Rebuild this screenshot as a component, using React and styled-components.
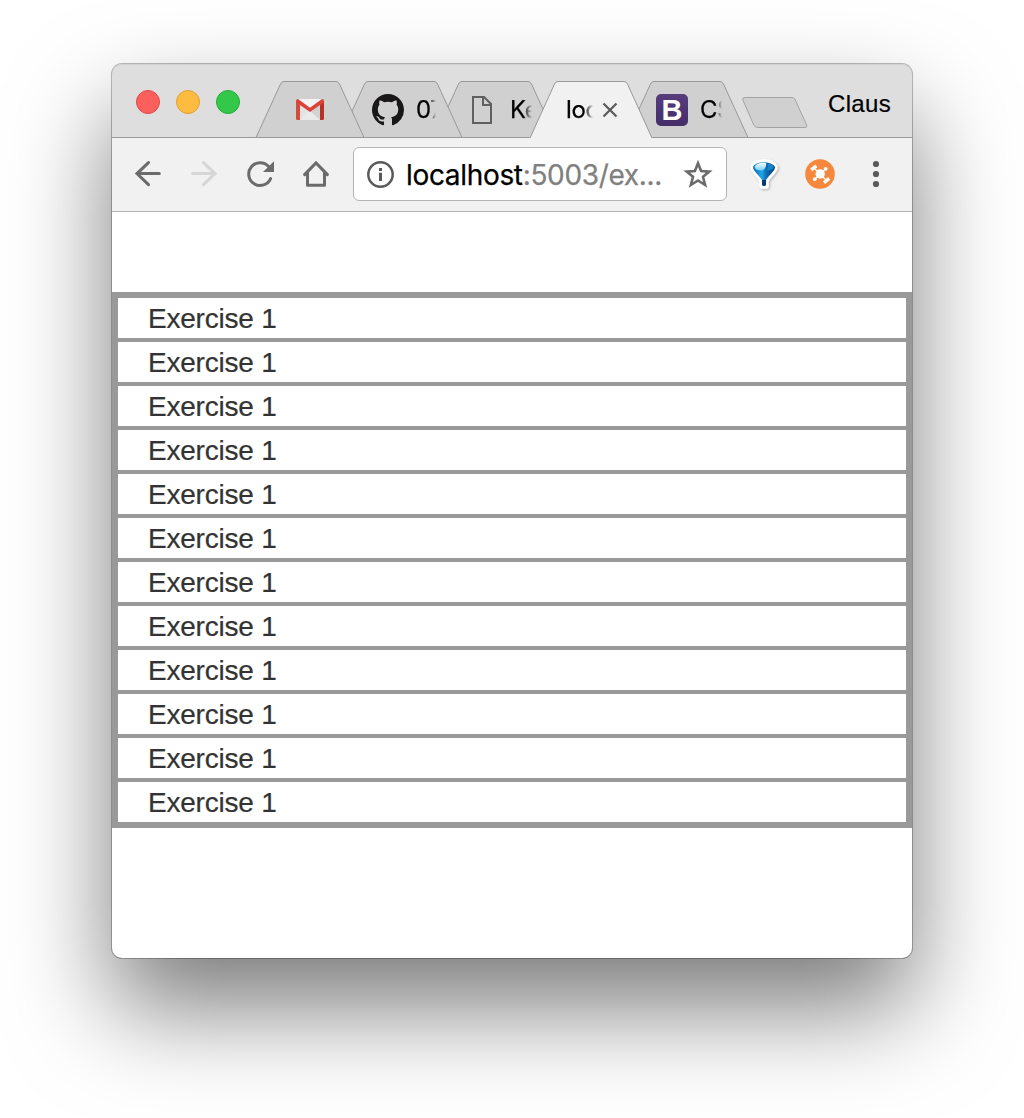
import React from 'react';
import styled, { createGlobalStyle } from 'styled-components';

const GlobalStyle = createGlobalStyle`
  * { box-sizing: border-box; }
  html, body { margin: 0; background: #fff; overflow: hidden; }
`;

const ui = `Inter, "Liberation Sans", sans-serif`;

const Desktop = styled.div`
  height: 1118px;
  padding: 64px 112px 160px;
  background: #fff;
  overflow: hidden;
`;

const Window = styled.main`
  display: flex;
  flex-direction: column;
  width: 800px;
  height: 894px;
  border-radius: 10px;
  background: #fff;
  box-shadow: 0 0 0 1px rgba(0, 0, 0, 0.26), 0 50px 100px rgba(0, 0, 0, 0.52);
`;

const TitleBar = styled.header`
  display: flex;
  height: 74px;
  padding-left: 24px;
  border-radius: 10px 10px 0 0;
  background: #dedede;
  box-shadow: inset 0 -1px #999, inset 0 1px #d0d0d0;
`;

const Lights = styled.div`
  display: flex;
  gap: 16px;
  width: 120px;
  padding-top: 26px;
`;

const Light = styled.span`
  width: 24px;
  height: 24px;
  border-radius: 50%;
  background: ${(p) => p.$fill};
  border: 1px solid ${(p) => p.$edge};
`;

const TabStrip = styled.nav`
  display: flex;
  flex: none;
  padding-top: 17px;
`;

const Tab = styled.div`
  position: relative;
  display: flex;
  align-items: center;
  flex: none;
  width: ${(p) => p.$width}px;
  height: 57px;
  margin-left: -${(p) => p.$overlap || 0}px;
  padding-left: ${(p) => p.$inset}px;
  z-index: ${(p) => p.$level};
`;

const TabShape = styled.svg`
  position: absolute;
  inset: 0;
  z-index: -1;
  overflow: visible;
`;

const TabTitle = styled.span`
  width: ${(p) => p.$width}px;
  margin-left: ${(p) => p.$gap || 0}px;
  padding-top: 1px;
  overflow: hidden;
  white-space: nowrap;
  font: 24px/30px ${ui};
  letter-spacing: -0.4px;
  color: #000;
  -webkit-text-stroke: 0.25px #000;
  mask-image: linear-gradient(to right, #000 ${(p) => p.$solid}px, transparent);
`;

const CloseButton = styled.span`
  margin-left: 9px;
`;

const Glyph = styled.svg`
  display: block;
  flex: none;
  overflow: visible;
`;

const BootstrapBadge = styled.span`
  width: 32px;
  height: 32px;
  border-radius: 5px;
  background: linear-gradient(#563d7c, #452d68);
  color: #fff;
  font: bold 29px/33px "Liberation Sans", Arial, sans-serif;
  text-align: center;
`;

const NewTab = styled(Glyph)`
  margin: 33px 0 0 -6px;
`;

const Profile = styled.span`
  margin: 26px 0 0 20px;
  font: 24px/28px "Liberation Sans", Arial, sans-serif;
  letter-spacing: 0.35px;
  color: #000;
  -webkit-text-stroke: 0.2px #000;
`;

const Toolbar = styled.div`
  display: flex;
  align-items: center;
  height: 74px;
  padding: 0 16px 2px 20px;
  background: #f1f1f1;
  border-bottom: 1px solid #b3b3b3;
`;

const NavButtons = styled.div`
  display: flex;
  gap: 24px;
  width: 221px;
`;

const AddressBar = styled.div`
  display: flex;
  align-items: center;
  width: 374px;
  height: 54px;
  padding: 0 12px;
  border: 1px solid #b4b4b4;
  border-radius: 6px;
  background: #fff;
`;

const Url = styled.span`
  flex: 1;
  margin-left: 12px;
  padding-top: 3px;
  white-space: nowrap;
  font: 28px/34px ${ui};
  letter-spacing: -0.33px;
  color: #808080;
  -webkit-text-stroke: 0.25px currentColor;
`;

const Host = styled.span`
  color: #000;
`;

const Extensions = styled.div`
  display: flex;
  gap: 24px;
  margin-left: 21px;
`;

const Page = styled.section`
  padding-top: 80px;
`;

const ExerciseList = styled.ul`
  display: flex;
  flex-direction: column;
  gap: 4px;
  margin: 0;
  padding: 6px;
  list-style: none;
  background: #999;
`;

const Exercise = styled.li`
  height: 40px;
  padding: 1px 0 0 30px;
  background: #fff;
  color: #333;
  font: 28px/40px "Liberation Sans", Arial, sans-serif;
  letter-spacing: -0.22px;
  -webkit-text-stroke: 0.2px #333;
`;

function Trapezoid({ width: w, active }) {
  const base = active ? 57 : 56.5;
  return (
    <TabShape width={w} height="57" viewBox={`0 0 ${w} 57`}>
      <path
        d={`M0 ${base} L24.5 3 Q25.7 .5 28 .5 H${w - 28} Q${w - 25.7} .5 ${w - 24.5} 3 L${w} ${base}`}
        fill={active ? '#f1f1f1' : '#d0d0d0'}
        stroke="#999"
      />
      {!active && <path d={`M0 56.5H${w}`} stroke="#999" />}
    </TabShape>
  );
}

function BrowserTab({ width, overlap, inset, level = 1, active, children }) {
  return (
    <Tab $width={width} $overlap={overlap} $inset={inset} $level={level}>
      <Trapezoid width={width} active={active} />
      {children}
    </Tab>
  );
}

const GmailIcon = () => (
  <Glyph width="28" height="21" viewBox="0 0 28 21">
    <rect x="1" width="26" height="21" rx="1.5" fill="#e3e3e3" />
    <path d="M4 21 14 11 24 21Z" fill="#eaeaea" />
    <path d="M14 12 24 5V21Z" fill="#d2d2d2" />
    <path d="M2 0H26L14 9Z" fill="#f3f3f3" />
    <path d="M0 2V19.5Q0 21 1.5 21H4V5Z" fill="#d54b3d" />
    <path d="M28 2V19.5Q28 21 26.5 21H24V5Z" fill="#b63127" />
    <path d="M0 2Q0 0 2 0L14 8.7 26 0Q28 0 28 2V3.2L14 13 0 3.2Z" fill="#db4437" />
  </Glyph>
);

const GithubIcon = () => (
  <Glyph width="32" height="32" viewBox="0 0 16 16">
    <path fill="#191717" d="M8 0C3.58 0 0 3.58 0 8c0 3.54 2.29 6.53 5.47 7.59.4.07.55-.17.55-.38 0-.19-.01-.82-.01-1.49-2.01.37-2.53-.49-2.69-.94-.09-.23-.48-.94-.82-1.13-.28-.15-.68-.52-.01-.53.63-.01 1.08.58 1.23.82.72 1.21 1.87.87 2.33.66.07-.52.28-.87.51-1.07-1.78-.2-3.64-.89-3.64-3.95 0-.87.31-1.59.82-2.15-.08-.2-.36-1.02.08-2.12 0 0 .67-.21 2.2.82.64-.18 1.32-.27 2-.27s1.36.09 2 .27c1.53-1.04 2.2-.82 2.2-.82.44 1.1.16 1.92.08 2.12.51.56.82 1.27.82 2.15 0 3.07-1.87 3.75-3.65 3.95.29.25.54.73.54 1.48 0 1.07-.01 1.93-.01 2.2 0 .21.15.46.55.38A8.01 8.01 0 0 0 16 8c0-4.42-3.58-8-8-8z" />
  </Glyph>
);

const FileIcon = () => (
  <Glyph width="20" height="28" viewBox="0 0 20 28" fill="none" stroke="#5f5f5f" strokeWidth="2">
    <path d="M1 1H12L19 8V27H1Z" />
    <path d="M11 1V9H19" />
  </Glyph>
);

const CloseIcon = () => (
  <Glyph width="16" height="16" viewBox="0 0 16 16">
    <path d="M1.5 1.5 14.5 14.5M14.5 1.5 1.5 14.5" stroke="#5a5a5a" strokeWidth="2.2" />
  </Glyph>
);

const BackIcon = ({ color = '#6b6b6b', flip }) => (
  <Glyph width="32" height="32" viewBox="0 0 32 32" fill="none" stroke={color} strokeWidth="3" strokeLinecap="round">
    <path transform={flip ? 'translate(32 0) scale(-1 1)' : undefined} d="M27.3 15.6H5M16.5 4.6 5 15.6 16.5 26.6" />
  </Glyph>
);

const ReloadIcon = () => (
  <Glyph width="32" height="32" viewBox="0 0 32 32">
    <path d="M26.6 20.6A11.4 11.4 0 1 1 24.6 8.4" fill="none" stroke="#6b6b6b" strokeWidth="3" strokeLinecap="round" />
    <path d="M30 3.3V14H19Z" fill="#6b6b6b" />
  </Glyph>
);

const HomeIcon = () => (
  <Glyph width="32" height="32" viewBox="0 0 32 32" fill="none" stroke="#6b6b6b" strokeWidth="3">
    <path d="M4.6 16.6 16 5 27.4 16.6" strokeLinecap="round" />
    <path d="M7.5 14V27.2H24.5V14" strokeLinejoin="round" />
  </Glyph>
);

const InfoIcon = () => (
  <Glyph width="28" height="28" viewBox="0 0 28 28">
    <circle cx="14.5" cy="14.5" r="12.2" fill="none" stroke="#5a5a5a" strokeWidth="2.5" />
    <path d="M13 8H16V11H13ZM13 12.7H16V21H13Z" fill="#5a5a5a" />
  </Glyph>
);

const StarIcon = () => (
  <Glyph width="32" height="32" viewBox="0 0 32 32">
    <path d="M16 5.2 19.1 13 27.3 13.6 21 18.8 23.1 27 16 22.5 8.9 27 11 18.8 4.7 13.6 12.9 13Z" fill="none" stroke="#6b6b6b" strokeWidth="2.6" />
  </Glyph>
);

const BalloonIcon = () => (
  <Glyph width="32" height="32" viewBox="0 0 32 32">
    <defs>
      <linearGradient id="balloon" x1="0" x2="1">
        <stop offset="0" stopColor="#0a6db5" />
        <stop offset=".4" stopColor="#22a5e6" />
        <stop offset=".6" stopColor="#0e6fb6" />
        <stop offset="1" stopColor="#063b76" />
      </linearGradient>
      <linearGradient id="shine" x2="0" y2="1">
        <stop offset="0" stopColor="#fff" />
        <stop offset="1" stopColor="#73cff5" />
      </linearGradient>
      <filter id="lift" x="-30%" y="-30%" width="160%" height="160%">
        <feDropShadow dx="1.2" dy="1.2" stdDeviation="1" floodOpacity=".25" />
      </filter>
    </defs>
    <path d="M5 9C7 2 24 2 27 9C27 13 21 17 18 22V28H14V22C11 17 5 13 5 9Z" fill="#fff" stroke="#fff" strokeWidth="5.5" strokeLinejoin="round" filter="url(#lift)" />
    <path d="M5 9C7 2.5 24 2.5 27 9C27 13 21 17 18 22V27Q16 29 14 27V22C11 17 5 13 5 9Z" fill="url(#balloon)" />
    <path d="M6.5 9C8 4.8 14 4.4 18 4.8Q19 10 14 12.5Q7.5 12.5 6.5 9Z" fill="url(#shine)" />
    <path d="M19.5 5.3Q25 6 26 9.5Q24 12.5 18.5 12.5Q21 9.5 19.5 5.3Z" fill="#1585cb" />
    <path d="M14 22H18V27Q16 29 14 27Z" fill="#053c70" />
  </Glyph>
);

const OrangeIcon = () => (
  <Glyph width="32" height="32" viewBox="0 0 32 32">
    <circle cx="16" cy="16" r="14.8" fill="#f6883d" />
    <circle cx="16.2" cy="16" r="4.7" fill="#fff" />
    <g stroke="#fff" strokeLinecap="round" fill="none">
      <path d="M10 10 22 22M10.8 21.2 21.7 10.8" strokeWidth="1.4" />
      <path d="M7.2 11.8 12.4 7.8M20 24.7 25.2 20.4" strokeWidth="3.4" strokeLinecap="butt" />
    </g>
    <circle cx="10.8" cy="21.2" r="1.9" fill="#fff" />
    <circle cx="21.7" cy="10.8" r="1.9" fill="#fff" />
  </Glyph>
);

const MenuIcon = () => (
  <Glyph width="32" height="32" viewBox="0 0 32 32" fill="#5a5a5a">
    <circle cx="16" cy="6" r="3.1" />
    <circle cx="16" cy="16" r="3.1" />
    <circle cx="16" cy="26" r="3.1" />
  </Glyph>
);

const exercises = Array.from({ length: 12 }, () => 'Exercise 1');

export default function App() {
  return (
    <Desktop>
      <GlobalStyle />
      <Window>
        <TitleBar>
          <Lights>
            <Light $fill="#fc605c" $edge="#e0484a" />
            <Light $fill="#fdbc40" $edge="#dfa030" />
            <Light $fill="#34c84a" $edge="#24ab36" />
          </Lights>
          <TabStrip>
            <BrowserTab width={108} inset={40} level={5}>
              <GmailIcon />
            </BrowserTab>
            <BrowserTab width={122} overlap={24} inset={32} level={4}>
              <GithubIcon />
              <TabTitle $width={20} $gap={12} $solid={13}>07</TabTitle>
            </BrowserTab>
            <BrowserTab width={122} overlap={28} inset={38} level={3}>
              <FileIcon />
              <TabTitle $width={22} $gap={18} $solid={13}>Ke</TabTitle>
            </BrowserTab>
            <BrowserTab width={122} overlap={26} inset={36} level={6} active>
              <TabTitle $width={27} $solid={18}>loc</TabTitle>
              <CloseButton>
                <CloseIcon />
              </CloseButton>
            </BrowserTab>
            <BrowserTab width={122} overlap={26} inset={30} level={2}>
              <BootstrapBadge>B</BootstrapBadge>
              <TabTitle $width={22} $gap={12} $solid={15}>CS</TabTitle>
            </BrowserTab>
          </TabStrip>
          <NewTab width="66" height="32" viewBox="0 0 66 32">
            <path d="M3 .5H50Q52 .5 53 2.5L64.7 28Q65.5 30.5 63 30.5H16Q13 30.5 11.8 28L.9 3Q0 .5 3 .5Z" fill="#d0d0d0" stroke="#a3a3a3" />
          </NewTab>
          <Profile>Claus</Profile>
        </TitleBar>
        <Toolbar>
          <NavButtons>
            <BackIcon />
            <BackIcon color="#d6d6d6" flip />
            <ReloadIcon />
            <HomeIcon />
          </NavButtons>
          <AddressBar>
            <InfoIcon />
            <Url><Host>localhost</Host>:5003/ex...</Url>
            <StarIcon />
          </AddressBar>
          <Extensions>
            <BalloonIcon />
            <OrangeIcon />
            <MenuIcon />
          </Extensions>
        </Toolbar>
        <Page>
          <ExerciseList>
            {exercises.map((name, i) => (
              <Exercise key={i}>{name}</Exercise>
            ))}
          </ExerciseList>
        </Page>
      </Window>
    </Desktop>
  );
}
